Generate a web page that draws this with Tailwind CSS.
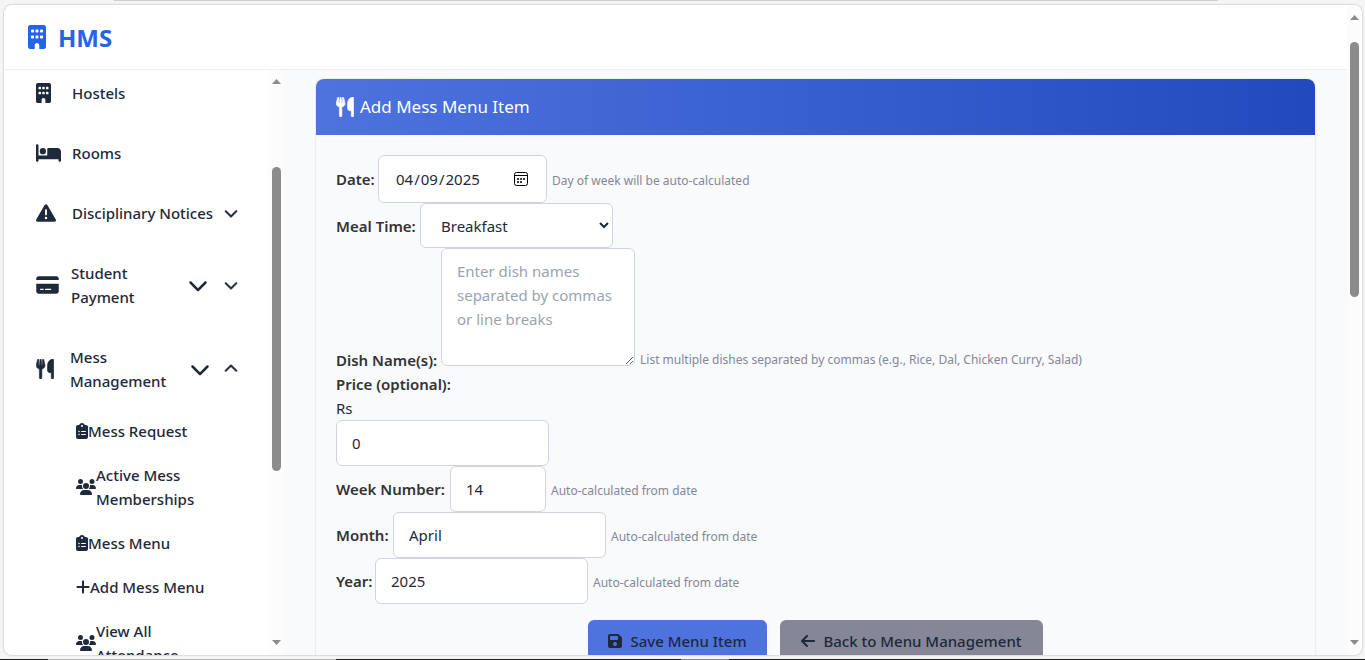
<!DOCTYPE html>
<html lang="en">
<head>
<meta charset="utf-8">
<meta name="viewport" content="width=device-width, initial-scale=1">
<title>HMS - Add Mess Menu Item</title>
<script src="https://cdn.jsdelivr.net/npm/@tailwindcss/browser@4"></script>
</head>
<body class="relative flex h-screen flex-col overflow-hidden bg-[#f5f5f5] pt-[5px] pr-[3px] pb-[5px] pl-1 font-['Noto_Sans','Open_Sans',sans-serif] text-[15px] leading-6 text-[#1e293b]">

<svg class="hidden" aria-hidden="true">
  <symbol id="i-building" viewBox="0 0 384 512"><path d="M48 0C21.500 0 0 21.500 0 48V464c0 26.500 21.500 48 48 48h96V432c0-26.500 21.500-48 48-48s48 21.500 48 48v80h96c26.500 0 48-21.500 48-48V48c0-26.500-21.500-48-48-48H48zM64 240c0-8.800 7.200-16 16-16h32c8.800 0 16 7.200 16 16v32c0 8.800-7.200 16-16 16H80c-8.800 0-16-7.200-16-16V240zm112-16h32c8.800 0 16 7.200 16 16v32c0 8.800-7.200 16-16 16H176c-8.800 0-16-7.200-16-16V240c0-8.800 7.200-16 16-16zm80 16c0-8.800 7.200-16 16-16h32c8.800 0 16 7.200 16 16v32c0 8.800-7.200 16-16 16H272c-8.800 0-16-7.200-16-16V240zM80 96h32c8.800 0 16 7.200 16 16v32c0 8.800-7.200 16-16 16H80c-8.800 0-16-7.200-16-16V112c0-8.800 7.200-16 16-16zm80 16c0-8.800 7.200-16 16-16h32c8.800 0 16 7.200 16 16v32c0 8.800-7.200 16-16 16H176c-8.800 0-16-7.200-16-16V112zM272 96h32c8.800 0 16 7.200 16 16v32c0 8.800-7.200 16-16 16H272c-8.800 0-16-7.200-16-16V112c0-8.800 7.200-16 16-16z"/></symbol>
  <symbol id="i-bed" viewBox="0 0 640 512"><path d="M32 32c17.700 0 32 14.300 32 32V320H288V160c0-17.700 14.300-32 32-32H544c53 0 96 43 96 96V448c0 17.700-14.300 32-32 32s-32-14.300-32-32V416H352 320 64v32c0 17.700-14.300 32-32 32s-32-14.300-32-32V64C0 46.300 14.300 32 32 32zm144 96a80 80 0 1 1 0 160 80 80 0 1 1 0-160z"/></symbol>
  <symbol id="i-warn" viewBox="0 0 512 512"><path d="M256 32c14.200 0 27.300 7.500 34.500 19.800l216 368c7.300 12.400 7.300 27.700 .2 40.100S486.300 480 472 480H40c-14.300 0-27.600-7.700-34.700-20.100s-7-27.800 .2-40.100l216-368C228.700 39.500 241.800 32 256 32zm0 128c-13.300 0-24 10.700-24 24V296c0 13.300 10.700 24 24 24s24-10.700 24-24V184c0-13.300-10.700-24-24-24zm32 224a32 32 0 1 0 -64 0 32 32 0 1 0 64 0z"/></symbol>
  <symbol id="i-card" viewBox="0 0 576 512"><path d="M64 32C28.700 32 0 60.700 0 96v32H576V96c0-35.300-28.700-64-64-64H64zM576 224H0V416c0 35.300 28.700 64 64 64H512c35.300 0 64-28.700 64-64V224zM112 352h64c8.800 0 16 7.200 16 16s-7.200 16-16 16H112c-8.800 0-16-7.200-16-16s7.200-16 16-16zm112 16c0-8.800 7.200-16 16-16H368c8.800 0 16 7.200 16 16s-7.200 16-16 16H240c-8.800 0-16-7.200-16-16z"/></symbol>
  <symbol id="i-utensils" viewBox="0 0 448 512"><path stroke="currentColor" stroke-width="14" d="M416 0C400 0 288 32 288 176V288c0 35.300 28.700 64 64 64h32V480c0 17.700 14.300 32 32 32s32-14.300 32-32V352 240 32c0-17.700-14.300-32-32-32zM64 16C64 7.800 57.900 1 49.700 .1S34.200 4.600 32.400 12.500L2.100 148.800C.7 155.100 0 161.500 0 167.900c0 45.900 35.100 83.600 80 87.700V480c0 17.700 14.300 32 32 32s32-14.300 32-32V255.600c44.900-4.100 80-41.800 80-87.700c0-6.400-.7-12.800-2.100-19.100L191.600 12.500c-1.800-8-9.300-13.300-17.400-12.400S160 7.800 160 16V150.200c0 5.400-4.400 9.800-9.800 9.800c-5.100 0-9.300-3.900-9.800-9L127.900 14.600C127.200 6.300 120.300 0 112 0s-15.200 6.300-15.900 14.600L83.700 151c-.5 5.100-4.700 9-9.800 9c-5.400 0-9.800-4.400-9.800-9.800V16z"/></symbol>
  <symbol id="i-clip" viewBox="0 0 384 512"><path d="M192 0c-41.800 0-77.400 26.700-90.500 64H64C28.700 64 0 92.700 0 128V448c0 35.300 28.700 64 64 64H320c35.300 0 64-28.700 64-64V128c0-35.300-28.700-64-64-64H282.500C269.400 26.700 233.800 0 192 0zm0 64a32 32 0 1 1 0 64 32 32 0 1 1 0-64zM72 272a24 24 0 1 1 48 0 24 24 0 1 1 -48 0zm104-16H304c8.800 0 16 7.200 16 16s-7.200 16-16 16H176c-8.800 0-16-7.200-16-16s7.200-16 16-16zM72 368a24 24 0 1 1 48 0 24 24 0 1 1 -48 0zm88 0c0-8.800 7.200-16 16-16H304c8.800 0 16 7.200 16 16s-7.200 16-16 16H176c-8.800 0-16-7.200-16-16z"/></symbol>
  <symbol id="i-users" viewBox="0 0 640 512"><path d="M144 0a80 80 0 1 1 0 160A80 80 0 1 1 144 0zM512 0a80 80 0 1 1 0 160A80 80 0 1 1 512 0zM0 298.700C0 239.800 47.800 192 106.700 192h42.700c15.900 0 31 3.500 44.600 9.700c-1.300 7.200-1.900 14.700-1.900 22.300c0 38.200 16.800 72.500 43.300 96c-.2 0-.4 0-.7 0H21.300C9.600 320 0 310.400 0 298.700zM405.300 320c-.2 0-.4 0-.7 0c26.600-23.500 43.300-57.800 43.300-96c0-7.600-.7-15-1.900-22.300c13.600-6.300 28.700-9.700 44.600-9.700h42.700C592.200 192 640 239.800 640 298.700c0 11.800-9.600 21.300-21.300 21.300H405.300zM224 224a96 96 0 1 1 192 0 96 96 0 1 1 -192 0zM128 485.300C128 411.700 187.700 352 261.300 352H378.700C452.300 352 512 411.700 512 485.300c0 14.700-11.900 26.700-26.700 26.700H154.700c-14.700 0-26.700-11.900-26.700-26.700z"/></symbol>
  <symbol id="i-plus" viewBox="0 0 448 512"><path d="M256 80c0-17.700-14.300-32-32-32s-32 14.300-32 32V224H48c-17.700 0-32 14.300-32 32s14.300 32 32 32H192V432c0 17.700 14.300 32 32 32s32-14.300 32-32V288H400c17.700 0 32-14.300 32-32s-14.300-32-32-32H256V80z"/></symbol>
  <symbol id="i-down" viewBox="0 0 512 512"><path d="M233.400 406.600c12.500 12.500 32.800 12.500 45.300 0l192-192c12.500-12.500 12.500-32.800 0-45.300s-32.800-12.500-45.300 0L256 338.700 86.600 169.400c-12.500-12.500-32.800-12.500-45.300 0s-12.500 32.800 0 45.300l192 192z"/></symbol>
  <symbol id="i-down-sm" viewBox="0 0 512 512"><path stroke="currentColor" stroke-width="16" d="M233.400 406.600c12.500 12.500 32.800 12.500 45.300 0l192-192c12.500-12.500 12.500-32.800 0-45.300s-32.800-12.500-45.300 0L256 338.700 86.600 169.400c-12.500-12.500-32.800-12.500-45.300 0s-12.500 32.800 0 45.300l192 192z"/></symbol>
  <symbol id="i-up" viewBox="0 0 512 512"><path stroke="currentColor" stroke-width="16" d="M233.400 105.400c12.500-12.500 32.800-12.500 45.300 0l192 192c12.500 12.500 12.500 32.800 0 45.300s-32.800 12.500-45.300 0L256 173.300 86.600 342.600c-12.500 12.500-32.800 12.500-45.300 0s-12.500-32.800 0-45.300l192-192z"/></symbol>
  <symbol id="i-save" viewBox="0 0 448 512"><path d="M64 32C28.700 32 0 60.700 0 96V416c0 35.300 28.700 64 64 64H384c35.300 0 64-28.700 64-64V173.300c0-17-6.700-33.300-18.700-45.300L352 50.700C340 38.700 323.700 32 306.700 32H64zm0 96c0-17.700 14.300-32 32-32H288c17.700 0 32 14.300 32 32v64c0 17.700-14.300 32-32 32H96c-17.700 0-32-14.300-32-32V128zM224 288a64 64 0 1 1 0 128 64 64 0 1 1 0-128z"/></symbol>
  <symbol id="i-left" viewBox="0 0 448 512"><path d="M9.400 233.400c-12.500 12.500-12.500 32.800 0 45.300l160 160c12.500 12.500 32.800 12.500 45.300 0s12.500-32.800 0-45.300L109.200 288 416 288c17.700 0 32-14.300 32-32s-14.300-32-32-32l-306.700 0L214.600 118.600c12.500-12.500 12.500-32.800 0-45.300s-32.800-12.500-45.300 0l-160 160z"/></symbol>
</svg>

<!-- window edges -->
<div class="absolute top-0 right-[147px] left-[114px] h-px bg-[#cfcfcf]"></div>
<div class="absolute inset-x-0 bottom-0 flex h-px">
  <span class="w-12 bg-[#1a1a1a]"></span><span class="w-72 bg-[#b5b5b5]"></span><span class="grow bg-[#1a1a1a]"></span><span class="w-12 bg-[#8a8a8a]"></span><span class="w-[636px] bg-[#1a1a1a]"></span>
</div>

<div class="flex min-h-0 grow overflow-hidden rounded-lg bg-[#f8fafc] shadow-[0_0_2px_rgba(0,0,0,0.35)]">
  <div class="flex min-w-0 grow flex-col">
    <header class="flex h-[65px] shrink-0 items-center gap-3 border-b border-[#eef0f3] bg-white px-6 text-[#2563eb]">
      <svg class="h-6 w-[18px] fill-current"><use href="#i-building"/></svg>
      <span class="pt-px text-[24px] font-bold">HMS</span>
    </header>

    <div class="flex min-h-0 grow">
      <aside class="flex w-[280px] shrink-0 overflow-hidden bg-white">
        <nav class="w-[264px] shrink-0 pl-8 font-medium">
          <a href="#" class="flex h-[59px] items-center gap-4 pb-[13px]">
            <span class="flex w-5 shrink-0"><svg class="h-5 w-[15px] fill-current"><use href="#i-building"/></svg></span>Hostels
          </a>
          <a href="#" class="flex h-12 items-center gap-[11px]">
            <svg class="h-5 w-[25px] fill-current"><use href="#i-bed"/></svg>Rooms
          </a>
          <button type="button" class="mt-3 flex h-12 w-[202px] items-center justify-between">
            <span class="flex items-center gap-4"><svg class="size-5 fill-current"><use href="#i-warn"/></svg>Disciplinary Notices</span>
            <svg class="size-[14px] fill-current"><use href="#i-down-sm"/></svg>
          </button>
          <button type="button" class="mt-3 flex h-[72px] w-[202px] items-center text-left">
            <svg class="mr-3 h-5 w-[23px] shrink-0 fill-current"><use href="#i-card"/></svg>
            <span class="grow">Student<br>Payment</span>
            <svg class="mr-4 size-5 fill-current"><use href="#i-down"/></svg>
            <svg class="size-[14px] fill-current"><use href="#i-down-sm"/></svg>
          </button>
          <button type="button" class="mt-3 flex h-[72px] w-[202px] items-center text-left">
            <svg class="mr-4 h-5 w-[18px] shrink-0 fill-current"><use href="#i-utensils"/></svg>
            <span class="grow">Mess<br>Management</span>
            <svg class="mr-[14px] size-5 fill-current"><use href="#i-down"/></svg>
            <svg class="size-[14px] fill-current"><use href="#i-up"/></svg>
          </button>
          <ul class="pt-[14px] pl-10">
            <li><a href="#" class="mb-5 flex items-center"><svg class="h-4 w-3 shrink-0 fill-current"><use href="#i-clip"/></svg>Mess Request</a></li>
            <li><a href="#" class="mb-5 flex items-center"><svg class="h-4 w-5 shrink-0 fill-current"><use href="#i-users"/></svg><span>Active Mess<br>Memberships</span></a></li>
            <li><a href="#" class="mb-5 flex items-center"><svg class="h-4 w-3 shrink-0 fill-current"><use href="#i-clip"/></svg>Mess Menu</a></li>
            <li><a href="#" class="mb-5 flex items-center"><svg class="h-4 w-[14px] shrink-0 fill-current"><use href="#i-plus"/></svg>Add Mess Menu</a></li>
            <li><a href="#" class="flex items-center"><svg class="h-4 w-5 shrink-0 fill-current"><use href="#i-users"/></svg><span>View All<br>Attendance</span></a></li>
          </ul>
        </nav>
        <div class="flex w-4 shrink-0 flex-col items-center bg-[#fcfcfc] pt-[9px] pb-[10px]">
          <svg class="h-[5px] w-[9px] fill-[#8b8b8b]" viewBox="0 0 9 5"><path d="M0 5 4.500 0 9 5z"/></svg>
          <div class="mt-[83px] h-[304px] w-[9px] rounded-full bg-[#8b8b8b]"></div>
          <svg class="mt-auto h-[5px] w-[9px] fill-[#8b8b8b]" viewBox="0 0 9 5"><path d="M0 0 4.500 5 9 0z"/></svg>
        </div>
      </aside>

      <main class="min-w-0 grow overflow-hidden px-8 pt-[9px]">
        <section class="rounded-lg shadow-[0_0_2px_rgba(0,0,0,0.2)]">
          <h1 class="flex h-14 items-center gap-[6px] rounded-t-lg bg-linear-to-r from-[#4e73df] to-[#224abe] px-5 text-[17px] text-white">
            <svg class="h-5 w-[18px] fill-current"><use href="#i-utensils"/></svg>Add Mess Menu Item
          </h1>
          <form class="px-5 pt-5 pb-8">
            <div class="flex items-center">
              <label for="date" class="w-[42px] shrink-0 font-semibold text-[#333]">Date:</label>
              <div class="relative">
                <input id="date" type="date" value="2025-04-09" class="h-12 w-[169px] rounded-md border border-[#d1d3e2] bg-white px-4 [&::-webkit-calendar-picker-indicator]:opacity-0">
                <svg class="pointer-events-none absolute top-4 right-[18px] size-4 fill-none stroke-black" viewBox="0 0 16 16"><rect x="1.500" y="1.500" width="13" height="13" rx="2"/><path d="M1.500 4.500h13"/><path d="M4 8h2M7 8h2M10 8h2M4 11h2M7 11h2" stroke-width="1.400"/></svg>
              </div>
              <small class="ml-[5px] pt-1 text-[12px] text-[#858796]">Day of week will be auto-calculated</small>
            </div>
            <div class="flex items-center">
              <label for="meal" class="w-[84px] shrink-0 font-semibold text-[#333]">Meal Time:</label>
              <select id="meal" class="h-[45px] w-[193px] rounded-md border border-[#d1d3e2] bg-white pl-4"><option>Breakfast</option><option>Lunch</option><option>Dinner</option></select>
            </div>
            <div class="flex items-end">
              <label for="dish" class="w-[105px] shrink-0 font-semibold text-[#333]">Dish Name(s):</label>
              <textarea id="dish" placeholder="Enter dish names separated by commas or line breaks" class="mb-[6px] h-[118px] w-[194px] rounded-md border border-[#d1d3e2] bg-white px-[15px] py-[10px] placeholder:text-[#9ca3af]"></textarea>
              <small class="ml-[5px] text-[12px] text-[#858796]">List multiple dishes separated by commas (e.g., Rice, Dal, Chicken Curry, Salad)</small>
            </div>
            <label for="price" class="block font-semibold text-[#333]">Price (optional):</label>
            <div>Rs</div>
            <input id="price" type="text" value="0" class="block h-[46px] w-[213px] rounded-md border border-[#d1d3e2] bg-white px-[15px]">
            <div class="flex items-center">
              <label for="week" class="w-[114px] shrink-0 font-semibold text-[#333]">Week Number:</label>
              <input id="week" type="text" value="14" class="h-[46px] w-24 rounded-md border border-[#d1d3e2] bg-white px-[15px]">
              <small class="ml-[5px] pt-1 text-[12px] text-[#858796]">Auto-calculated from date</small>
            </div>
            <div class="flex items-center">
              <label for="month" class="w-[57px] shrink-0 font-semibold text-[#333]">Month:</label>
              <input id="month" type="text" value="April" class="h-[46px] w-[213px] rounded-md border border-[#d1d3e2] bg-white px-[15px]">
              <small class="ml-[5px] pt-1 text-[12px] text-[#858796]">Auto-calculated from date</small>
            </div>
            <div class="flex items-center">
              <label for="year" class="w-[39px] shrink-0 font-semibold text-[#333]">Year:</label>
              <input id="year" type="text" value="2025" class="h-[46px] w-[213px] rounded-md border border-[#d1d3e2] bg-white px-[15px]">
              <small class="ml-[5px] pt-1 text-[12px] text-[#858796]">Auto-calculated from date</small>
            </div>
            <div class="mt-4 flex justify-center gap-[13px] font-medium">
              <button type="submit" class="flex h-[42px] w-[179px] items-center justify-center gap-2 rounded-md bg-[#4e73df]"><svg class="h-4 w-[14px] fill-current"><use href="#i-save"/></svg>Save Menu Item</button>
              <a href="#" class="flex h-[42px] w-[263px] items-center justify-center gap-2 rounded-md bg-[#858796]"><svg class="h-4 w-[14px] fill-current"><use href="#i-left"/></svg>Back to Menu Management</a>
            </div>
          </form>
        </section>
      </main>
    </div>
  </div>

  <!-- page scrollbar -->
  <div class="flex w-[15px] shrink-0 flex-col items-center bg-[#fcfcfc] pt-[10px] pb-[10px]">
    <svg class="h-[5px] w-[9px] fill-[#8b8b8b]" viewBox="0 0 9 5"><path d="M0 5 4.500 0 9 5z"/></svg>
    <div class="mt-[22px] h-[255px] w-[9px] rounded-full bg-[#8b8b8b]"></div>
    <svg class="mt-auto h-[5px] w-[9px] fill-[#8b8b8b]" viewBox="0 0 9 5"><path d="M0 0 4.500 5 9 0z"/></svg>
  </div>
</div>
</body>
</html>
